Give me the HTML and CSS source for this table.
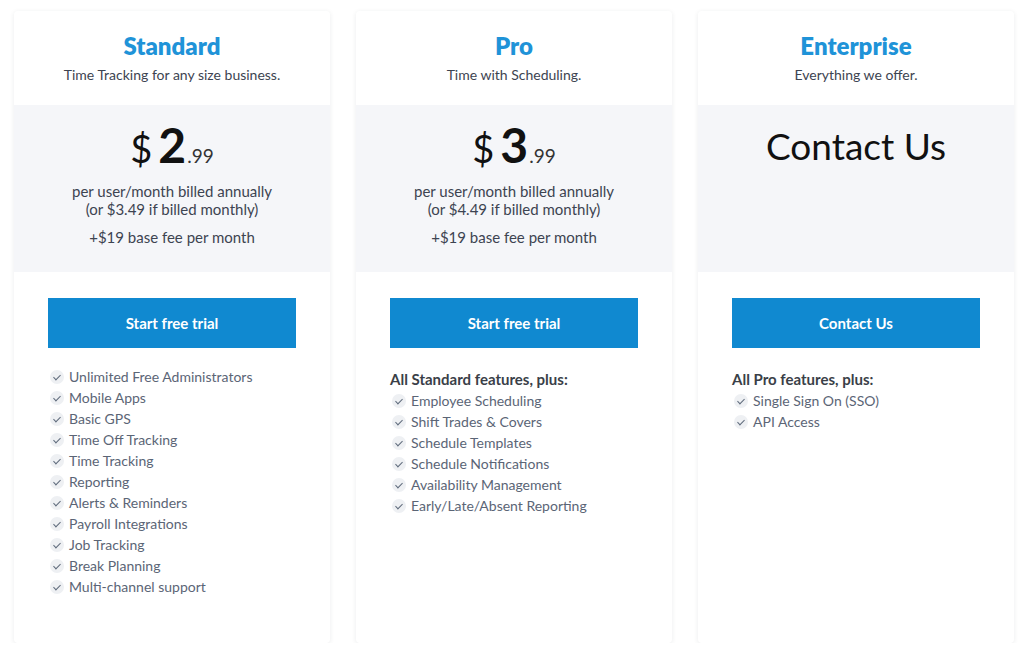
FILE: index.html
```html
<!DOCTYPE html>
<html lang="en">
<head>
    <meta charset="UTF-8">
    <meta name="viewport" content="width=device-width, initial-scale=1.0">
    <title>Pricing</title>
    <link rel="stylesheet" href="styles.css">
</head>
<body>
    <div class="plans">
        <!-- Standard -->
        <div class="plan">
            <div class="plan-head">
                <h2>Standard</h2>
                <p>Time Tracking for any size business.</p>
            </div>
            <div class="plan-price">
                <div class="price"><span class="cur">$</span><span class="big">2</span><span class="cents">.99</span></div>
                <p>per user/month billed annually<br>(or $3.49 if billed monthly)</p>
                <p class="fee">+$19 base fee per month</p>
            </div>
            <div class="plan-body">
                <a class="btn" href="#">Start free trial</a>
                <ul class="features">
                    <li>Unlimited Free Administrators</li>
                    <li>Mobile Apps</li>
                    <li>Basic GPS</li>
                    <li>Time Off Tracking</li>
                    <li>Time Tracking</li>
                    <li>Reporting</li>
                    <li>Alerts &amp; Reminders</li>
                    <li>Payroll Integrations</li>
                    <li>Job Tracking</li>
                    <li>Break Planning</li>
                    <li>Multi-channel support</li>
                </ul>
            </div>
        </div>

        <!-- Pro -->
        <div class="plan">
            <div class="plan-head">
                <h2>Pro</h2>
                <p>Time with Scheduling.</p>
            </div>
            <div class="plan-price">
                <div class="price"><span class="cur">$</span><span class="big">3</span><span class="cents">.99</span></div>
                <p>per user/month billed annually<br>(or $4.49 if billed monthly)</p>
                <p class="fee">+$19 base fee per month</p>
            </div>
            <div class="plan-body">
                <a class="btn" href="#">Start free trial</a>
                <h4>All Standard features, plus:</h4>
                <ul class="features">
                    <li>Employee Scheduling</li>
                    <li>Shift Trades &amp; Covers</li>
                    <li>Schedule Templates</li>
                    <li>Schedule Notifications</li>
                    <li>Availability Management</li>
                    <li>Early/Late/Absent Reporting</li>
                </ul>
            </div>
        </div>

        <!-- Enterprise -->
        <div class="plan">
            <div class="plan-head">
                <h2>Enterprise</h2>
                <p>Everything we offer.</p>
            </div>
            <div class="plan-price">
                <div class="contact">Contact Us</div>
            </div>
            <div class="plan-body">
                <a class="btn" href="#">Contact Us</a>
                <h4>All Pro features, plus:</h4>
                <ul class="features">
                    <li>Single Sign On (SSO)</li>
                    <li>API Access</li>
                </ul>
            </div>
        </div>
    </div>
</body>
</html>
```

FILE: styles.css
```css
/* Pricing table */
body {
    font-family: Lato, "Noto Sans", sans-serif;
    margin: 0;
    padding: 0;
    background-color: #fff;
    color: #3d4451;
}

.plans {
    display: grid;
    grid-template-columns: repeat(3, 316px);
    column-gap: 26px;
    padding: 11px 0 0 14px;
}

.plan {
    height: 632px;
    background-color: #fff;
    border-radius: 4px;
    box-shadow: 0 1px 5px rgba(30, 40, 60, 0.09);
    overflow: hidden;
}

.plan-head {
    height: 94px;
    text-align: center;
    padding-top: 1px;
    box-sizing: border-box;
}

.plan-head h2 {
    margin: 20px 0 0;
    font-size: 24px;
    font-weight: 800;
    color: #1f93d8;
    line-height: 28px;
}

.plan-head p {
    margin: 6px 0 0;
    font-size: 14px;
    line-height: 18px;
}

.plan-price {
    height: 167px;
    background-color: #f5f6f9;
    text-align: center;
    padding-top: 15px;
    box-sizing: border-box;
}

.price {
    color: #111;
    line-height: 50px;
    height: 50px;
}

.price .cur {
    font-size: 38px;
    margin-right: 6px;
}

.price .big {
    font-size: 48px;
    font-weight: 700;
}

.price .cents {
    font-size: 19px;
    color: #333;
    margin-left: 1px;
}

.plan-price p {
    margin: 12px 0 0;
    font-size: 15px;
    line-height: 18px;
    color: #3d4451;
}

.plan-price p.fee {
    margin-top: 10px;
}

.contact {
    font-size: 37px;
    color: #111;
    line-height: 44px;
    margin-top: 4px;
}

.plan-body {
    padding: 26px 34px 0;
}

.btn {
    display: block;
    height: 50px;
    line-height: 50px;
    background-color: #1089d0;
    color: #fff;
    text-align: center;
    text-decoration: none;
    font-size: 15px;
    font-weight: 700;
}

h4 {
    margin: 21px 0 0;
    font-size: 15px;
    font-weight: 700;
    line-height: 20px;
    color: #3a3f48;
}

.features {
    list-style: none;
    margin: 0;
    padding: 0;
    padding-top: 18px;
}

h4 + .features {
    padding-top: 1px;
}

.features li {
    position: relative;
    padding-left: 21px;
    font-size: 14px;
    line-height: 21px;
    color: #5b6576;
}

.features li::before {
    content: "";
    position: absolute;
    left: 2px;
    top: 4px;
    width: 14px;
    height: 14px;
    border-radius: 50%;
    background-color: #eef0f3;
}

.features li::after {
    content: "";
    position: absolute;
    left: 7px;
    top: 7px;
    width: 3px;
    height: 6px;
    border-right: 1.5px solid #5f6b7c;
    border-bottom: 1.5px solid #5f6b7c;
    transform: rotate(45deg);
}
```
